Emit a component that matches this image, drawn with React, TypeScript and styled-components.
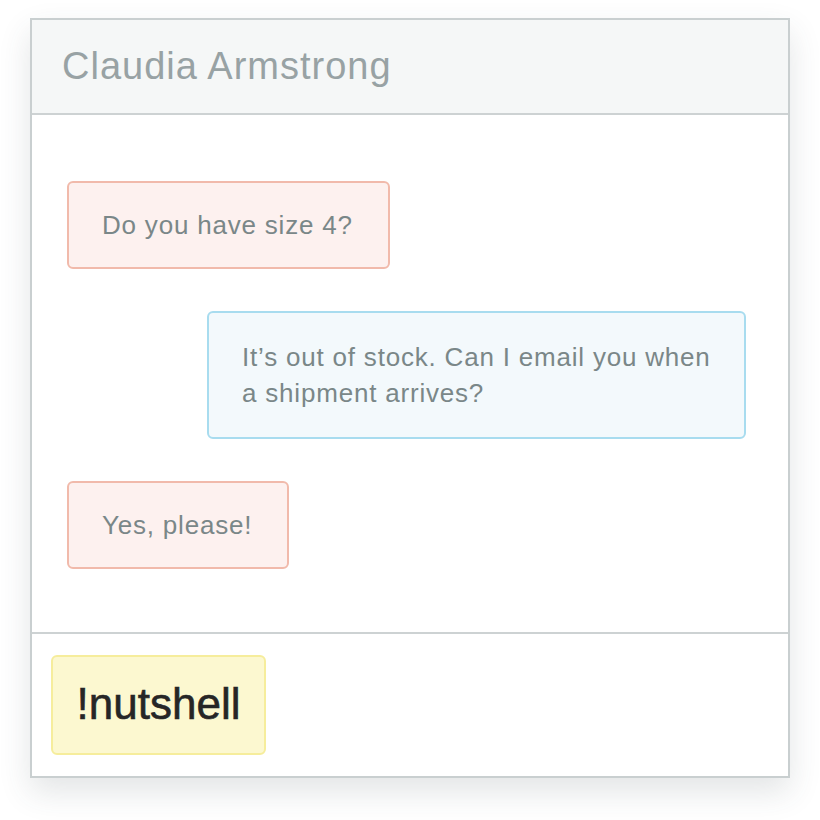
import React from "react";
import styled, { createGlobalStyle } from "styled-components";

const Global = createGlobalStyle`
  html, body { margin: 0; padding: 0; background: #ffffff; }
  body { font-family: "Liberation Sans", Arial, Helvetica, sans-serif; }
`;

const Page = styled.div`
  width: 820px;
  height: 820px;
  box-sizing: border-box;
  padding: 18px 30px 0 30px;
`;

const Card = styled.div`
  width: 760px;
  box-sizing: border-box;
  border: 2px solid #c9cfd0;
  background: #ffffff;
  box-shadow: 0 14px 30px rgba(60, 70, 75, 0.14);
  display: flex;
  flex-direction: column;
`;

const Header = styled.div`
  height: 95px;
  box-sizing: border-box;
  background: #f5f7f7;
  border-bottom: 2px solid #cdd2d3;
  display: flex;
  align-items: center;
  padding: 0 0 0 30px;
`;

const Title = styled.h1`
  margin: 0;
  font-weight: 400;
  font-size: 38px;
  color: #98a2a4;
  letter-spacing: 1px;
`;

const Thread = styled.div`
  display: flex;
  flex-direction: column;
  gap: 42px;
  padding: 66px 42px 63px 35px;
  border-bottom: 2px solid #cdd2d3;
`;

const Bubble = styled.div<{ $side: "left" | "right" }>`
  box-sizing: border-box;
  align-self: ${(p) => (p.$side === "left" ? "flex-start" : "flex-end")};
  width: ${(p) => (p.$side === "left" ? "auto" : "539px")};
  border-radius: 6px;
  border: 2px solid ${(p) => (p.$side === "left" ? "#f1baab" : "#a8dcef")};
  background: ${(p) => (p.$side === "left" ? "#fdf1ef" : "#f3f9fc")};
  color: #7a8788;
  font-size: 26px;
  letter-spacing: 0.8px;
  line-height: 36px;
  padding: ${(p) => (p.$side === "left" ? "24px 35px 24px 33px" : "26px 22px 26px 33px")};
`;

const Footer = styled.div`
  padding: 21px 19px 21px 19px;
  display: flex;
`;

const Tag = styled.div`
  box-sizing: border-box;
  width: 215px;
  height: 100px;
  border-radius: 6px;
  border: 2px solid #f6ed9c;
  background: #fcf8d0;
  display: flex;
  align-items: center;
  justify-content: center;
  color: #262626;
  font-size: 44px;
  -webkit-text-stroke: 0.6px #262626;
  padding-bottom: 2px;
`;

export default function App() {
  return (
    <>
      <Global />
      <Page>
        <Card>
          <Header>
            <Title>Claudia Armstrong</Title>
          </Header>
          <Thread>
            <Bubble $side="left">Do you have size 4?</Bubble>
            <Bubble $side="right">
              It’s out of stock. Can I email you when a shipment arrives?
            </Bubble>
            <Bubble $side="left">Yes, please!</Bubble>
          </Thread>
          <Footer>
            <Tag>!nutshell</Tag>
          </Footer>
        </Card>
      </Page>
    </>
  );
}
